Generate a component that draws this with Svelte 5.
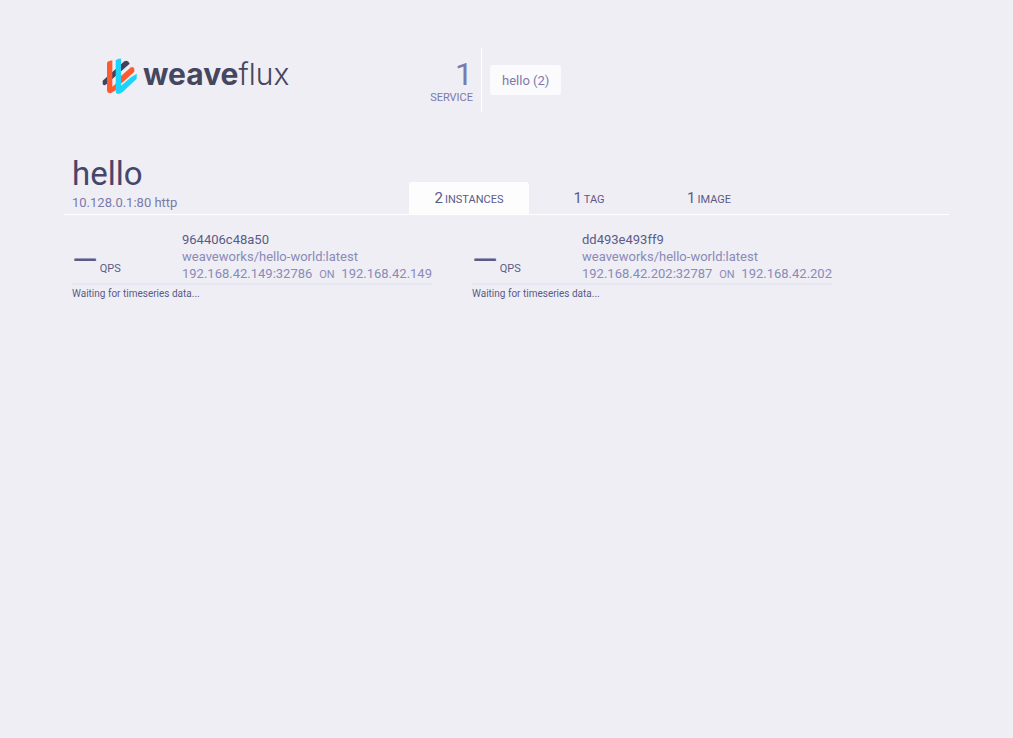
<script>
  const tabs = [
    { count: 2, label: 'instances' },
    { count: 1, label: 'tag' },
    { count: 1, label: 'image' }
  ];
  let active = $state(0);
  const instances = [
    { id: '964406c48a50', image: 'weaveworks/hello-world:latest', address: '192.168.42.149:32786', host: '192.168.42.149' },
    { id: 'dd493e493ff9', image: 'weaveworks/hello-world:latest', address: '192.168.42.202:32787', host: '192.168.42.202' }
  ];
</script>

<div class="page">
  <header>
    <div class="logo">
      <svg viewBox="18 24 114 114" width="38" height="38" aria-hidden="true">
        <path d="M23 101V92L88 34Q99 29 104 41L34 103Q26 109 23 101Z" fill="#42425c" />
        <path d="M36 40Q36 34 43 33L52 31V110L64 100V119L47 130Q36 130 36 121Z" fill="#ff5a2d" />
        <path d="M62 31Q70 25 78 26V107L108 82Q120 74 125 71V86L84 125Q76 132 68 132Q62 130 62 124Z" fill="#1bd3fb" />
        <path d="M78 94V78L106 53Q115 48 118 57V65L78 101Z" fill="#ff5a2d" />
      </svg>
      <span class="word"><b>weave</b>flux</span>
    </div>
    <div class="total">
      <span class="number">1</span>
      <span class="caption">service</span>
    </div>
    <button class="chip">hello (2)</button>
  </header>

  <main>
    <div class="bar">
      <div class="title">
        <h1>hello</h1>
        <p>10.128.0.1:80 http</p>
      </div>
      <nav>
        {#each tabs as tab, i}
          <button class:active={active === i} onclick={() => (active = i)}>
            <span class="count">{tab.count}</span>
            <span class="caption">{tab.label}</span>
          </button>
        {/each}
      </nav>
    </div>
    <div class="cards">
      {#each instances as item}
        <section>
          <div class="info">
            <div class="qps"><span class="dash">—</span> <span class="caption">QPS</span></div>
            <div class="detail">
              <div class="id">{item.id}</div>
              <div>{item.image}</div>
              <div class="where"><span>{item.address}</span> <span class="on">on</span> <span>{item.host}</span></div>
            </div>
          </div>
          <p>Waiting for timeseries data...</p>
        </section>
      {/each}
    </div>
  </main>
</div>

<style>
  :global(body) { margin: 0; background: #eeeef4; }
  .page { padding: 48px 64px; font-family: Roboto, sans-serif; font-size: 13px; color: #5b5b88; }
  button { font: inherit; color: inherit; border: 0; background: none; cursor: pointer; }
  h1, p { margin: 0; font-weight: 400; }
  .caption { font-size: 11px; text-transform: uppercase; }
  header { display: flex; align-items: center; color: #7a7aab; }
  .logo { display: flex; align-items: center; gap: 4px; width: 308px; padding-left: 37px; padding-bottom: 6px; box-sizing: border-box; color: #46465f; }
  .word { font-family: Inter, sans-serif; font-size: 30px; line-height: 36px; font-weight: 300; padding-bottom: 6px; }
  .word b { font-weight: 700; }
  .total { display: flex; flex-direction: column; align-items: flex-end; width: 110px; height: 64px; box-sizing: border-box; padding: 8px 8px 0 0; border-right: 1px solid #fff; }
  .number { font-size: 32px; line-height: 36px; }
  .total .caption { line-height: 12px; }
  .chip { margin-left: 8px; height: 30px; padding: 0 12px; border-radius: 3px; background: #fbfbfd; }
  main { margin-top: 44px; }
  .bar { display: flex; justify-content: space-between; align-items: flex-end; border-bottom: 1px solid #fff; padding-left: 8px; }
  h1 { font-size: 33px; line-height: 36px; color: #46466c; }
  .title p { line-height: 22px; color: #7a7aab; }
  nav { display: flex; width: 540px; }
  nav button { display: flex; align-items: baseline; justify-content: center; gap: 2px; width: 120px; height: 32px; padding: 6px 0 0; border-radius: 3px 3px 0 0; }
  nav .active { background: #fdfdfe; }
  .count { font-size: 15px; line-height: 20px; }
  .cards { display: flex; flex-wrap: wrap; gap: 40px; padding: 16px 8px; }
  section { width: 360px; }
  .info { display: flex; justify-content: space-between; border-bottom: 2px solid #e6e6f3; }
  .qps { display: flex; align-items: baseline; gap: 2px; padding-top: 12px; }
  .dash { font-size: 33px; line-height: 36px; }
  .detail { width: 250px; line-height: 17px; color: #8a8ab8; white-space: nowrap; }
  .id { color: #5b5b88; }
  .where { display: flex; align-items: baseline; justify-content: space-between; }
  .on { font-size: 11px; text-transform: uppercase; }
  section p { font-size: 10px; line-height: 18px; }
</style>
